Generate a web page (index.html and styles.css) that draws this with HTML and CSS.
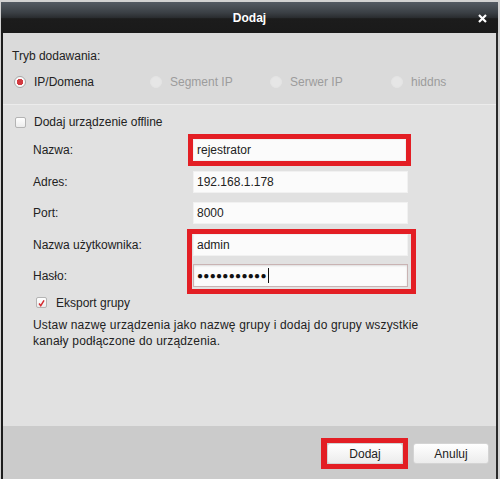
FILE: index.html
```html
<html>
<head>
<meta charset="utf-8">
<link rel="stylesheet" href="styles.css">
<title>Dodaj</title>
</head>
<body>
<div class="dialog">
  <div class="titlebar">
    <span class="title">Dodaj</span>
    <svg class="close" width="9" height="9" viewBox="0 0 9 9"><path d="M1 1L8 8M8 1L1 8" stroke="#fff" stroke-width="2.2"/></svg>
  </div>

  <div class="mode">
    <div class="mode-label">Tryb dodawania:</div>
    <div class="radios">
      <div class="radio-item"><span class="radio on"></span><span>IP/Domena</span></div>
      <div class="radio-item off"><span class="radio"></span><span>Segment IP</span></div>
      <div class="radio-item off"><span class="radio"></span><span>Serwer IP</span></div>
      <div class="radio-item off"><span class="radio"></span><span>hiddns</span></div>
    </div>
  </div>

  <div class="panel">
    <div class="check-row offline"><span class="box"></span><span>Dodaj urządzenie offline</span></div>

    <div class="form">
      <div class="row">
        <span class="label">Nazwa:</span>
        <div class="field mark">rejestrator</div>
      </div>
      <div class="row">
        <span class="label">Adres:</span>
        <div class="field">192.168.1.178</div>
      </div>
      <div class="row">
        <span class="label">Port:</span>
        <div class="field">8000</div>
      </div>
      <div class="group">
        <div class="row">
          <span class="label">Nazwa użytkownika:</span>
          <div class="field">admin</div>
        </div>
        <div class="row">
          <span class="label">Hasło:</span>
          <div class="field focus"><span class="dots">●●●●●●●●●●●</span><span class="caret"></span></div>
        </div>
      </div>
    </div>

    <div class="check-row export"><span class="box checked"><svg width="11" height="11" viewBox="0 0 11 11"><path d="M2.5 5.5L4.6 8.2L8.6 1.8" fill="none" stroke="#d42a2f" stroke-width="1.8"/></svg></span><span>Eksport grupy</span></div>

    <p class="hint">Ustaw nazwę urządzenia jako nazwę grupy i dodaj do grupy wszystkie<br>kanały podłączone do urządzenia.</p>
  </div>

  <div class="footer">
    <span class="btn-mark"><button class="btn">Dodaj</button></span>
    <button class="btn plain">Anuluj</button>
  </div>
</div>
</body>
</html>
```

FILE: styles.css
```css
body {
  margin: 0;
  background: #d2d2d2;
  font-family: "Liberation Sans", Arial, sans-serif;
  font-size: 12px;
  color: #222;
}

.dialog {
  margin: 2px 2px 0 1px;
  height: 477px;
  border-left: 2px solid #1c1c1c;
  border-right: 2px solid #2a2a2a;
  display: flex;
  flex-direction: column;
  background: #e1e1e1;
}

.titlebar {
  height: 31px;
  margin: 0 -2px;
  background: linear-gradient(#545b63 0%, #3a3f44 35%, #2a2d30 50%, #1c1c1c 54%, #1a1a1a 100%);
  display: flex;
  align-items: center;
  justify-content: center;
  position: relative;
}

.title {
  color: #fff;
  font-weight: bold;
  font-size: 12px;
}

.close {
  position: absolute;
  right: 11px;
  top: 12px;
}

.mode {
  background: #dadada;
  height: 71px;
  padding: 16px 0 0 9px;
  box-sizing: border-box;
}

.mode-label {
  line-height: 14px;
}

.radios {
  display: grid;
  grid-template-columns: 136px 120px 121px auto;
  margin-top: 12px;
  margin-left: 2px;
}

.radio-item {
  display: flex;
  align-items: center;
  gap: 8px;
  line-height: 14px;
}

.radio-item.off {
  color: #9c9c9c;
}

.radio {
  width: 12px;
  height: 12px;
  border-radius: 50%;
  box-sizing: border-box;
  border: 1px solid #e4e4e4;
  background: #e6e6e6;
}

.radio.on {
  border: 1px solid #a8a8a8;
  background: radial-gradient(circle, #d23a40 0 3px, #fafafa 3.5px);
}

.panel {
  flex: 1;
  border-top: 1px solid #ececec;
  padding-top: 10px;
}

.check-row {
  display: flex;
  align-items: center;
  line-height: 14px;
  height: 14px;
}

.offline {
  margin-left: 12px;
  gap: 8px;
}

.box {
  width: 11px;
  height: 11px;
  box-sizing: border-box;
  border: 1px solid #b4b4b4;
  border-radius: 2px;
  background: linear-gradient(#fff, #ececec);
  display: flex;
}

.form {
  margin-top: 10px;
  margin-left: 30px;
  display: flex;
  flex-direction: column;
  gap: 9.5px;
}

.group {
  display: flex;
  flex-direction: column;
  gap: 9px;
  position: relative;
}

.group::after {
  content: "";
  position: absolute;
  left: 154px;
  top: -5px;
  width: 219px;
  height: 55px;
  border: 5px solid #e31e24;
}

.row {
  display: flex;
  align-items: center;
  height: 22px;
}

.label {
  width: 160px;
}

.field {
  width: 215px;
  height: 22px;
  box-sizing: border-box;
  background: #fbfbfb;
  border: 1px solid #f1f1f1;
  padding-left: 3px;
  display: flex;
  align-items: center;
}

.field.mark {
  width: 213px;
  outline: 5px solid #e31e24;
}

.field.focus {
  height: 23px;
  border: 1px solid #c9b3b3;
  box-shadow: inset 0 1px 2px rgba(0, 0, 0, 0.12);
}

.dots {
  font-size: 10px;
  letter-spacing: 0.3px;
  color: #111;
}

.caret {
  width: 1px;
  height: 15px;
  background: #111;
  margin-left: 1px;
}

.export {
  margin-top: 9px;
  margin-left: 33px;
  gap: 9px;
}

.hint {
  margin: 7px 0 0 30px;
  line-height: 16px;
  letter-spacing: 0.18px;
}

.footer {
  height: 53px;
  background: #cbcbcb;
  display: flex;
  justify-content: flex-end;
  align-items: flex-start;
  gap: 5px;
  padding: 12px 7px 0 0;
  box-sizing: border-box;
}

.btn-mark {
  display: flex;
  border: 5px solid #e31e24;
  border-left-width: 6px;
}

.btn {
  width: 76px;
  height: 21px;
  font-family: "Liberation Sans", Arial, sans-serif;
  font-size: 12px;
  color: #222;
  border: 1px solid #d4d4d4;
  border-radius: 3px;
  background: linear-gradient(#ffffff, #ececec);
  padding: 0;
}

.btn.plain {
  margin-top: 5px;
}
```
